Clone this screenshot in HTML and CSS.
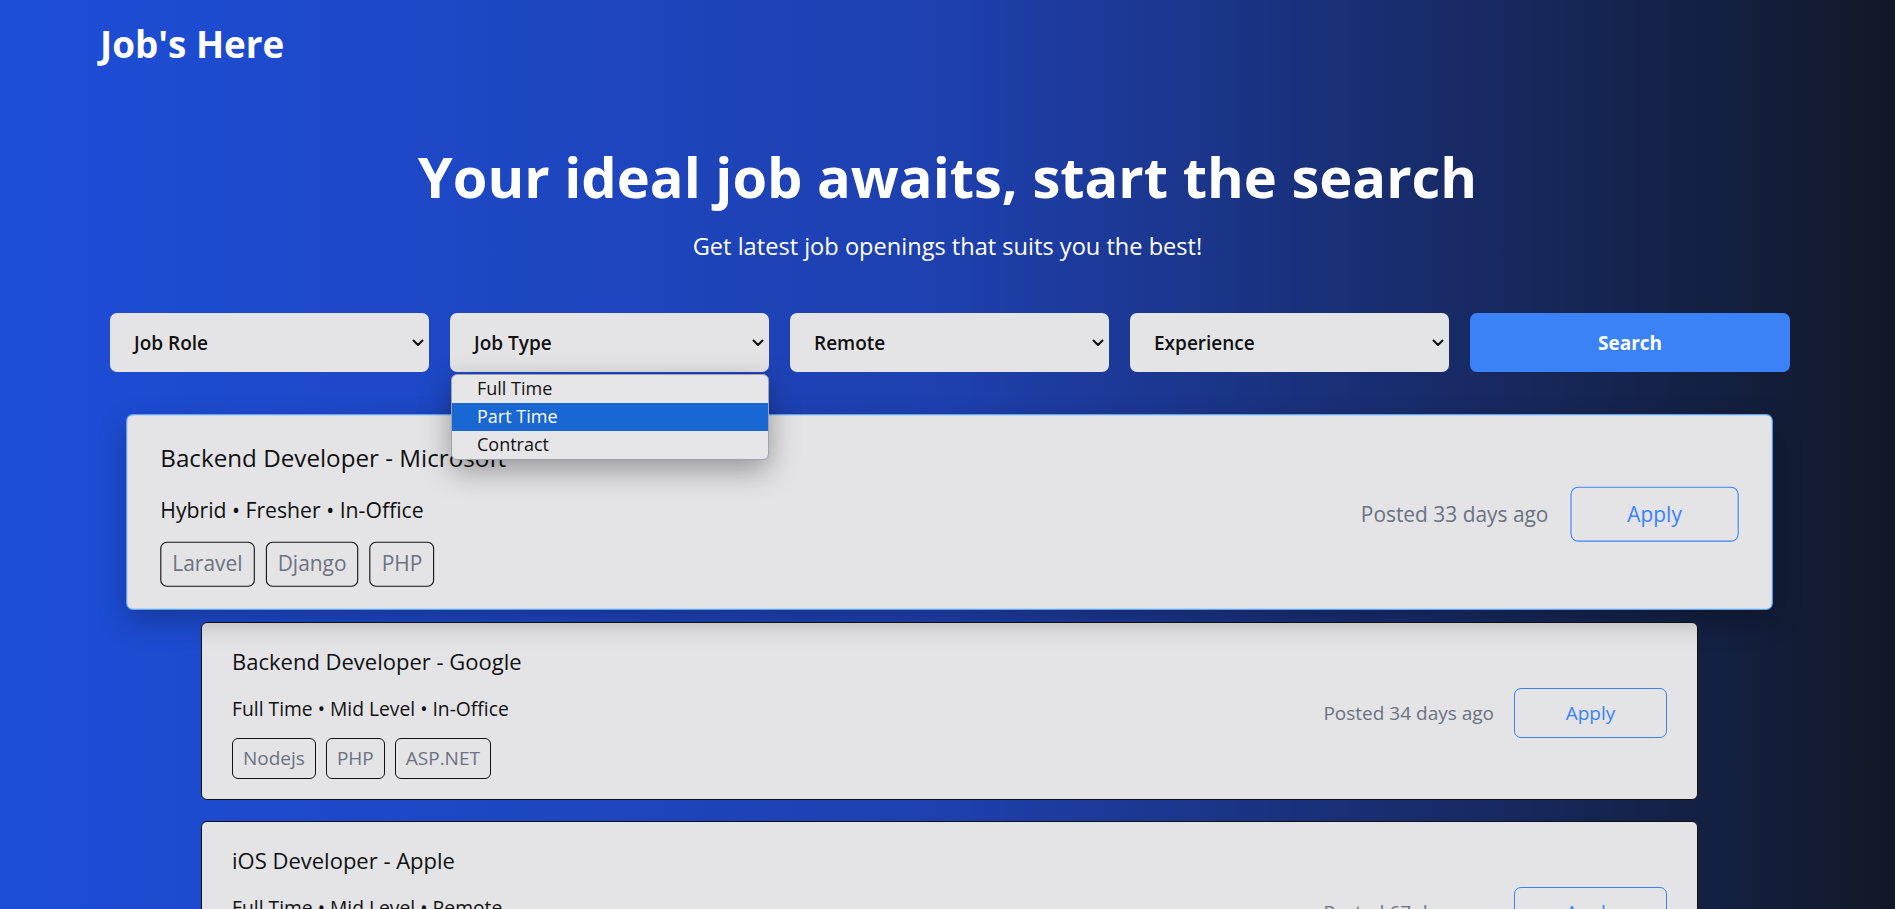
FILE: index.html
```html
<!DOCTYPE html>
<html lang="en">
<head>
<meta charset="utf-8">
<title>Job's Here</title>
<link rel="stylesheet" href="styles.css">
</head>
<body>
<div class="page">
  <header class="topbar">
    <div class="logo">Job's Here</div>
  </header>

  <section class="hero">
    <h1 class="hero-title">Your ideal job awaits, start the search</h1>
    <p class="hero-sub">Get latest job openings that suits you the best!</p>
  </section>

  <div class="filters">
    <div class="select">
      <span>Job Role</span>
      <svg class="chev" width="12" height="8" viewBox="0 0 12 8"><path d="M1.5 1.5l4.5 4.5 4.5-4.5" fill="none" stroke="#111" stroke-width="2" stroke-linecap="round" stroke-linejoin="round"/></svg>
    </div>
    <div class="select is-open">
      <span>Job Type</span>
      <svg class="chev" width="12" height="8" viewBox="0 0 12 8"><path d="M1.5 1.5l4.5 4.5 4.5-4.5" fill="none" stroke="#111" stroke-width="2" stroke-linecap="round" stroke-linejoin="round"/></svg>
      <ul class="options">
        <li class="option">Full Time</li>
        <li class="option active">Part Time</li>
        <li class="option">Contract</li>
      </ul>
    </div>
    <div class="select">
      <span>Remote</span>
      <svg class="chev" width="12" height="8" viewBox="0 0 12 8"><path d="M1.5 1.5l4.5 4.5 4.5-4.5" fill="none" stroke="#111" stroke-width="2" stroke-linecap="round" stroke-linejoin="round"/></svg>
    </div>
    <div class="select">
      <span>Experience</span>
      <svg class="chev" width="12" height="8" viewBox="0 0 12 8"><path d="M1.5 1.5l4.5 4.5 4.5-4.5" fill="none" stroke="#111" stroke-width="2" stroke-linecap="round" stroke-linejoin="round"/></svg>
    </div>
    <button class="search-btn">Search</button>
  </div>

  <main class="jobs">
    <article class="card card-hover">
      <div class="card-main">
        <h2 class="card-title">Backend Developer - Microsoft</h2>
        <p class="card-meta">Hybrid • Fresher • In-Office</p>
        <div class="tags">
          <span class="tag">Laravel</span>
          <span class="tag">Django</span>
          <span class="tag">PHP</span>
        </div>
      </div>
      <div class="card-side">
        <span class="posted">Posted 33 days ago</span>
        <button class="apply-btn">Apply</button>
      </div>
    </article>

    <article class="card">
      <div class="card-main">
        <h2 class="card-title">Backend Developer - Google</h2>
        <p class="card-meta">Full Time • Mid Level • In-Office</p>
        <div class="tags">
          <span class="tag">Nodejs</span>
          <span class="tag">PHP</span>
          <span class="tag">ASP.NET</span>
        </div>
      </div>
      <div class="card-side">
        <span class="posted">Posted 34 days ago</span>
        <button class="apply-btn">Apply</button>
      </div>
    </article>

    <article class="card">
      <div class="card-main">
        <h2 class="card-title">iOS Developer - Apple</h2>
        <p class="card-meta">Full Time • Mid Level • Remote</p>
        <div class="tags">
          <span class="tag">Swift</span>
          <span class="tag">SwiftUI</span>
        </div>
      </div>
      <div class="card-side">
        <span class="posted">Posted 67 days ago</span>
        <button class="apply-btn">Apply</button>
      </div>
    </article>
  </main>
</div>
</body>
</html>
```

FILE: styles.css
```css
html {
  overflow: hidden;
}

* {
  box-sizing: border-box;
}

body {
  margin: 0;
  font-family: "Open Sans", "Noto Sans", "Liberation Sans", sans-serif;
  color: #111;
}

.page {
  min-height: 100vh;
  background: linear-gradient(to right, #1d4ed8 0%, #1e40af 50%, #111827 100%);
  padding-bottom: 40px;
}

.topbar {
  padding: 24px 0 0 100px;
}

.logo {
  color: #fff;
  font-weight: 700;
  font-size: 36.8px;
  line-height: 40px;
}

.hero {
  text-align: center;
  color: #fff;
  margin-top: 81px;
}

.hero-title {
  margin: 0;
  font-size: 56px;
  line-height: 62px;
  font-weight: 700;
}

.hero-sub {
  margin: 23px 0 0;
  font-size: 23.6px;
  line-height: 32px;
}

.filters {
  position: relative;
  z-index: 10;
  display: flex;
  gap: 21px;
  margin: 51px 0 0 110px;
}

.select {
  position: relative;
  width: 319px;
  flex: none;
  height: 59px;
  display: flex;
  align-items: center;
  justify-content: space-between;
  padding: 0 5px 0 24px;
  background: #e4e4e7;
  border-radius: 7px;
  font-weight: 600;
  font-size: 19px;
}

.chev {
  display: block;
}

.options {
  position: absolute;
  top: 61px;
  left: 1px;
  right: 0;
  margin: 0;
  padding: 0;
  list-style: none;
  background: #e6e6e9;
  border: 1px solid #9ca3af;
  border-radius: 6px;
  overflow: hidden;
  box-shadow: 0 10px 30px rgba(0, 0, 0, 0.35);
  font-weight: 400;
  font-size: 18px;
}

.option {
  height: 28px;
  line-height: 27px;
  padding-left: 25px;
  color: #111;
}

.option.active {
  background: #1967d2;
  color: #fff;
}

.search-btn {
  width: 320px;
  flex: none;
  height: 59px;
  padding: 0;
  border: 0;
  border-radius: 7px;
  background: #3b82f6;
  color: #fff;
  font-family: inherit;
  font-weight: 700;
  font-size: 19px;
}

.jobs {
  width: 1497px;
  margin: 51px 0 0 201px;
  display: flex;
  flex-direction: column;
  gap: 21px;
}

.card {
  display: flex;
  align-items: center;
  justify-content: space-between;
  background: #e4e4e7;
  border: 1px solid #111;
  border-radius: 6px;
  padding: 24px 30px 20px 30px;
}

.card-hover {
  border-color: #60a5fa;
  transform: scale(1.1);
  box-shadow: 0 10px 25px rgba(0, 0, 0, 0.25);
}

.card-title {
  margin: 0;
  font-size: 22px;
  line-height: 28px;
  font-weight: 500;
}

.card-meta {
  margin: 21px 0 0;
  font-size: 19.3px;
  line-height: 26px;
}

.tags {
  display: flex;
  gap: 10px;
  margin-top: 16px;
}

.tag {
  border: 1px solid #111;
  border-radius: 6px;
  padding: 6px 10px;
  font-size: 19px;
  line-height: 27px;
  color: #6b7280;
}

.card-side {
  display: flex;
  align-items: center;
  gap: 20px;
}

.posted {
  color: #6b7280;
  font-size: 19px;
}

.apply-btn {
  width: 153px;
  height: 50px;
  border: 1px solid #3b82f6;
  border-radius: 7px;
  background: transparent;
  color: #3b82f6;
  font-family: inherit;
  font-size: 19px;
}
```
